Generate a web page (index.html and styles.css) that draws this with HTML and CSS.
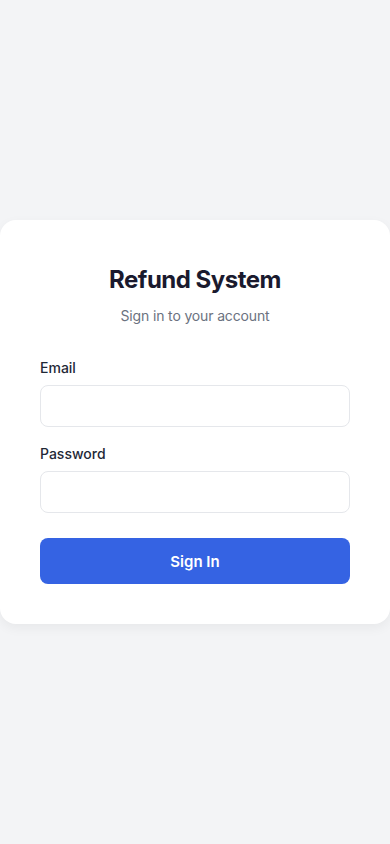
FILE: index.html
```
<!DOCTYPE html>
<html lang="en">
<head>
    <meta charset="UTF-8">
    <meta name="viewport" content="width=device-width, initial-scale=1.0">
    <title>Refund System - Sign In</title>
    <link rel="stylesheet" href="styles.css">
</head>
<body>
    <div class="login-card">
        <div class="login-header">
            <h1 class="title">Refund System</h1>
            <p class="subtitle">Sign in to your account</p>
        </div>
        <form class="login-form">
            <div class="form-group">
                <label for="email">Email</label>
                <input type="email" id="email">
            </div>
            <div class="form-group">
                <label for="password">Password</label>
                <input type="password" id="password">
            </div>
            <button type="submit" class="submit-button">Sign In</button>
        </form>
    </div>
</body>
</html>
```

FILE: styles.css
```
* {
    box-sizing: border-box;
}

body {
    background-color: #f3f4f6;
    font-family: 'Inter', 'Liberation Sans', sans-serif;
    display: flex;
    align-items: center;
    justify-content: center;
    min-height: 100vh;
    margin: 0;
    padding: 0;
}

.login-card {
    background-color: #ffffff;
    width: 100%;
    border-radius: 16px;
    padding: 42px 40px 40px;
    box-shadow: 0 4px 12px rgba(0, 0, 0, 0.05);
}

.login-header {
    text-align: center;
    margin-bottom: 32px;
}

.title {
    font-size: 24px;
    line-height: 36px;
    font-weight: 700;
    letter-spacing: -0.5px;
    color: #1a1a2e;
    margin: 0;
}

.subtitle {
    font-size: 14px;
    line-height: 20px;
    letter-spacing: -0.15px;
    color: #6b7280;
    margin: 8px 0 0;
}

.form-group {
    display: flex;
    flex-direction: column;
    gap: 7px;
    margin-bottom: 17px;
}

.form-group label {
    font-size: 14px;
    line-height: 20px;
    font-weight: 500;
    color: #1f2937;
}

.form-group input {
    height: 42px;
    border: 1px solid #e5e7eb;
    border-radius: 8px;
    padding: 0 12px;
    font-size: 14px;
    font-family: inherit;
    background-color: #ffffff;
}

.submit-button {
    display: block;
    width: 100%;
    height: 46px;
    margin-top: 25px;
    background-color: #3563e3;
    color: #ffffff;
    border: none;
    border-radius: 8px;
    font-size: 15px;
    font-weight: 600;
    font-family: inherit;
    cursor: pointer;
}
```
